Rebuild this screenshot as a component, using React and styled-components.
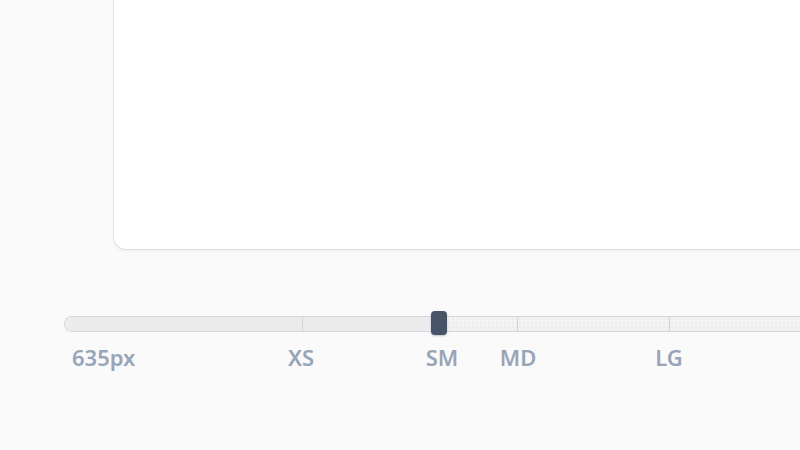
import styled, { createGlobalStyle } from "styled-components";

const GlobalStyle = createGlobalStyle`
  *, *::before, *::after {
    box-sizing: border-box;
  }
  html, body {
    margin: 0;
    padding: 0;
    background: #fafafa;
    overflow: hidden;
  }
  body {
    font-family: "Noto Sans", "Open Sans", sans-serif;
  }
`;

const Page = styled.div`
  width: 800px;
  height: 450px;
  display: flex;
  flex-direction: column;
  overflow: hidden;
`;

const Stage = styled.div`
  padding-left: 114px;
  display: flex;
`;

const Card = styled.div`
  flex: 0 0 760px;
  height: 269px;
  margin-top: -20px;
  background: #ffffff;
  border-radius: 12px;
  box-shadow: 0 1px 3px rgba(15, 23, 42, 0.12), 0 0 0 1px rgba(15, 23, 42, 0.04);
`;

const Ruler = styled.div`
  position: relative;
  margin: 67px 0 0 64px;
  width: 800px;
`;

const Track = styled.div`
  display: flex;
  height: 16px;
  border: 1px solid #d3d7dd;
  border-right: none;
  border-radius: 8px 0 0 8px;
  overflow: hidden;
`;

const Segment = styled.div`
  flex: 0 0 ${(p) => p.$width}px;
  border-left: ${(p) => (p.$first ? "none" : "1px solid #cfd3d9")};
  background: ${(p) => (p.$filled ? "#ececed" : "#f3f3f4")};
  background-image: ${(p) =>
    p.$filled
      ? "none"
      : "radial-gradient(circle, #e2e2e4 0.6px, transparent 0.8px)"};
  background-size: 4px 4px;
  display: flex;
`;

const Fill = styled.div`
  width: ${(p) => p.$width}px;
  background: #ececed;
`;

const Thumb = styled.div`
  position: absolute;
  left: 367px;
  top: -5px;
  width: 16px;
  height: 24px;
  border-radius: 4px;
  background: #475467;
  box-shadow: 0 1px 2px rgba(15, 23, 42, 0.25);
`;

const Labels = styled.div`
  position: relative;
  height: 30px;
  margin-top: 12px;
`;

const Label = styled.span`
  position: absolute;
  left: ${(p) => p.$x}px;
  transform: ${(p) => (p.$center ? "translateX(-50%)" : "none")};
  font-size: 22px;
  font-weight: 600;
  color: #97a5b8;
  line-height: 26px;
  white-space: nowrap;
`;

const segments = [
  { width: 237, filled: true },
  { width: 215, fillTo: 136 },
  { width: 152 },
  { width: 200 },
];

const labels = [
  { text: "635px", x: 8 },
  { text: "XS", x: 237, center: true },
  { text: "SM", x: 378, center: true },
  { text: "MD", x: 454, center: true },
  { text: "LG", x: 605, center: true },
];

export default function App() {
  return (
    <Page>
      <GlobalStyle />
      <Stage>
        <Card />
      </Stage>
      <Ruler>
        <Track>
          {segments.map((s, i) => (
            <Segment key={i} $width={s.width} $filled={s.filled} $first={i === 0}>
              {s.fillTo ? <Fill $width={s.fillTo} /> : null}
            </Segment>
          ))}
        </Track>
        <Thumb />
        <Labels>
          {labels.map((l) => (
            <Label key={l.text} $x={l.x} $center={l.center}>
              {l.text}
            </Label>
          ))}
        </Labels>
      </Ruler>
    </Page>
  );
}
